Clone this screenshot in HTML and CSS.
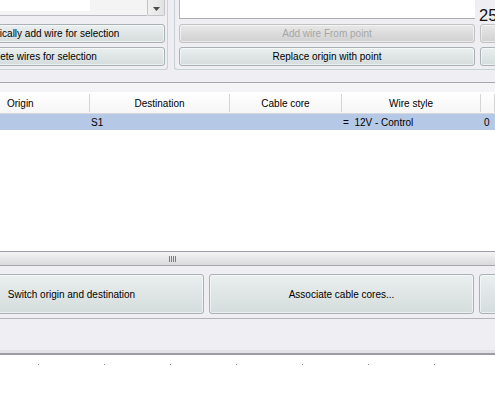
FILE: index.html
```html
<!DOCTYPE html>
<html>
<head>
<meta charset="utf-8">
<link rel="stylesheet" href="styles.css">
</head>
<body>
<div class="top">
  <div class="gl">
    <div class="listrow">
      <div class="list"><div class="list-item"></div></div>
      <div class="vscroll">
        <svg width="7" height="4" viewBox="0 0 7 4"><path d="M0 0H7L3.5 4Z" fill="#4a4a4a"/></svg>
      </div>
    </div>
    <div class="btn wide">Automatically add wire for selection</div>
    <div class="btn wide">Delete wires for selection</div>
  </div>
  <div class="gr">
    <div class="textbox"></div>
    <div class="bigval">25</div>
    <div class="btn disabled">Add wire From point</div>
    <div class="btn disabled"></div>
    <div class="btn">Replace origin with point</div>
    <div class="btn"></div>
  </div>
</div>
<div class="strip"></div>
<div class="grid">
  <div class="gridhead">
    <div class="hc left">Origin</div>
    <div class="hc">Destination</div>
    <div class="hc">Cable core</div>
    <div class="hc">Wire style</div>
    <div class="hc"></div>
  </div>
  <div class="gridrow selected">
    <div class="c"></div>
    <div class="c">S1</div>
    <div class="c"></div>
    <div class="c pre">=  12V - Control</div>
    <div class="c last">0</div>
  </div>
  <div class="gridbody"></div>
</div>
<div class="splitter"><span class="grip"></span></div>
<div class="bottombar">
  <div class="btn big first">Switch origin and destination</div>
  <div class="btn big">Associate cable cores...</div>
  <div class="btn big"></div>
</div>
<div class="panel"></div>
<div class="ruler">
  <span class="tick"></span><span class="tick"></span><span class="tick"></span><span class="tick"></span><span class="tick"></span><span class="tick"></span><span class="tick"></span>
</div>
</body>
</html>
```
FILE: styles.css
```css
* { box-sizing: border-box; }
html, body { margin: 0; }
body {
  width: 495px;
  height: 400px;
  overflow: hidden;
  background: #eeeef3;
  font-family: "Liberation Sans", Arial, sans-serif;
  font-size: 10px;
  color: #000;
}

/* top area */
.top { display: flex; height: 70px; }
.gl {
  width: 168px;
  flex-shrink: 0;
  display: flex;
  flex-direction: column;
  overflow: hidden;
  padding-right: 2px;
  border-right: 1px solid #c8d0d8;
  border-bottom: 1px solid #c8d0d8;
  border-bottom-right-radius: 3px;
}
.listrow { display: flex; height: 16px; margin-bottom: 8px; flex-shrink: 0; }
.list { width: 147px; background: #f4f4f5; border-bottom: 1px solid #b9bcc4; }
.list-item { width: 90px; height: 11px; background: #fff; }
.vscroll {
  width: 18px;
  background: linear-gradient(90deg, #f0f0f0, #e2e2e2);
  border: 1px solid #c2c4c8;
  border-top: none;
  border-radius: 0 0 2px 2px;
  display: flex;
  align-items: flex-end;
  justify-content: center;
  padding-bottom: 4px;
}
.btn {
  height: 19px;
  flex-shrink: 0;
  border: 1px solid #a9b1b5;
  border-radius: 3px;
  background: linear-gradient(#eaefef, #d5dcdc);
  box-shadow: inset 0 0 0 1px rgba(255,255,255,0.55);
  display: flex;
  align-items: center;
  justify-content: center;
  white-space: nowrap;
  overflow: hidden;
}
.gl .btn.wide { width: 248px; margin-left: -83px; }
.gl .btn.wide + .btn.wide { margin-top: 4px; }
.btn.disabled {
  color: #a6a6a6;
  border-color: #c2c2c2;
  background: linear-gradient(#e8e8e8, #d0d0d0);
}
.gr {
  flex: 1;
  margin-left: 6px;
  padding-left: 4px;
  border-left: 1px solid #c8d0d8;
  border-bottom: 1px solid #c8d0d8;
  border-bottom-left-radius: 3px;
  display: grid;
  grid-template-columns: 296px 1fr;
  grid-template-rows: 20px 19px 19px;
  column-gap: 5px;
  row-gap: 4px;
  overflow: hidden;
}
.textbox {
  height: 19px;
  background: #fff;
  border-left: 1px solid #b4b7be;
  border-bottom: 1px solid #abadb3;
}
.bigval {
  align-self: end;
  font-size: 16.5px;
  line-height: 12px;
  margin-left: -1px;
  margin-bottom: -1px;
  color: #111;
  white-space: nowrap;
}

/* grid */
.strip { height: 12px; }
.grid {
  height: 169px;
  border-top: 1px solid #a8a8b0;
  padding-top: 9px;
  background: #f4f4f7;
  display: flex;
  flex-direction: column;
}
.gridhead, .gridrow {
  display: grid;
  grid-template-columns: 90px 140px 112px 139px 1fr;
}
.gridhead {
  height: 22px;
  background: linear-gradient(#ffffff, #f6f6f7);
  border-bottom: 1px solid #d8d8dc;
}
.hc {
  display: flex;
  align-items: center;
  justify-content: center;
  border-right: 1px solid #d5d5d8;
  margin: 2px 0 1px;
}
.hc.left { justify-content: flex-start; padding-left: 7px; }
.gridrow { height: 16px; }
.gridrow.selected { background: #b5c9e7; }
.c { display: flex; align-items: center; padding-left: 1px; white-space: nowrap; }
.c.pre { white-space: pre; }
.c.last { padding-left: 3px; }
.gridbody { flex: 1; background: #fff; }

/* splitter */
.splitter {
  height: 15px;
  border-top: 1px solid #9d9da5;
  border-bottom: 1px solid #a6a6ae;
  background: linear-gradient(#f4f4f4, #d9d9dc);
  display: flex;
  align-items: center;
  padding-left: 169px;
}
.grip {
  width: 7px;
  height: 6px;
  background: repeating-linear-gradient(90deg, #7c7c80 0 1px, transparent 1px 2px);
}

/* bottom buttons */
.bottombar {
  height: 52px;
  padding: 8px 0 4px;
  display: flex;
  gap: 5px;
  overflow: hidden;
}
.btn.big { width: 265px; height: 40px; }
.btn.big.first { margin-left: -61px; }

.panel {
  height: 37px;
  border-top: 1px solid #b3b3ba;
  border-bottom: 2px solid #9c9ca4;
  background: linear-gradient(#eeeef3 0 31px, #e2e2e8 31px);
}
.ruler {
  display: flex;
  padding: 9px 0 0 38px;
  gap: 65px;
  background: #fff;
  height: 45px;
}
.tick { width: 1px; height: 1px; background: #8a8a8a; }
```
